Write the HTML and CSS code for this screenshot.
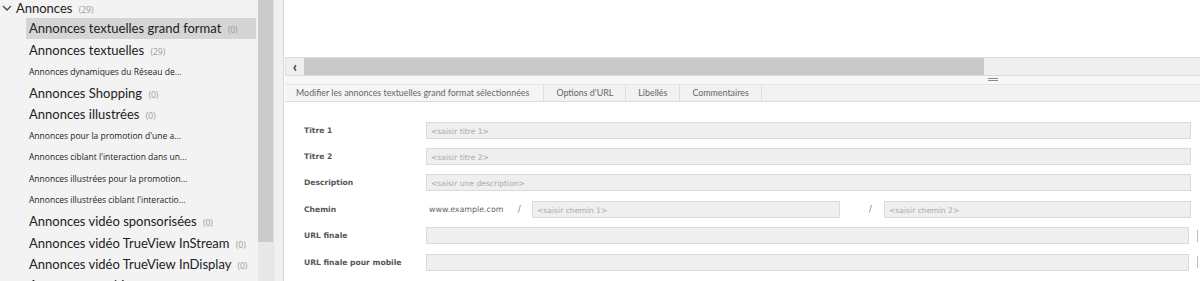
FILE: index.html
```html
<!DOCTYPE html>
<html lang="fr">
<head>
    <meta charset="UTF-8">
    <title>Annonces</title>
    <link rel="stylesheet" href="styles.css">
</head>
<body>
<div class="app">
    <div class="sidebar">
        <ul class="tree">
            <li class="node root">
                <svg class="chev" width="10" height="6" viewBox="0 0 10 6"><path d="M1 1 L5 5 L9 1" fill="none" stroke="#444" stroke-width="1.3"/></svg>
                Annonces <span class="count">(29)</span>
            </li>
            <li class="node big selected">Annonces textuelles grand format <span class="count">(0)</span></li>
            <li class="node big">Annonces textuelles <span class="count">(29)</span></li>
            <li class="node small">Annonces dynamiques du Réseau de...</li>
            <li class="node big">Annonces Shopping <span class="count">(0)</span></li>
            <li class="node big">Annonces illustrées <span class="count">(0)</span></li>
            <li class="node small">Annonces pour la promotion d'une a...</li>
            <li class="node small">Annonces ciblant l'interaction dans un...</li>
            <li class="node small">Annonces illustrées pour la promotion...</li>
            <li class="node small">Annonces illustrées ciblant l'interactio...</li>
            <li class="node big">Annonces vidéo sponsorisées <span class="count">(0)</span></li>
            <li class="node big">Annonces vidéo TrueView InStream <span class="count">(0)</span></li>
            <li class="node big">Annonces vidéo TrueView InDisplay <span class="count">(0)</span></li>
            <li class="node big">Annonces graphiques <span class="count">(0)</span></li>
        </ul>
        <div class="vscroll"><div class="vthumb"></div></div>
        <div class="gutter"></div>
    </div>

    <div class="main">
        <div class="grid-area"></div>
        <div class="hscroll">
            <span class="arrow">&lsaquo;</span>
            <div class="hthumb"></div>
        </div>
        <div class="splitter"><span class="grip"></span></div>
        <div class="tabs">
            <div class="tab active">Modifier les annonces textuelles grand format sélectionnées</div>
            <div class="tab">Options d'URL</div>
            <div class="tab">Libellés</div>
            <div class="tab">Commentaires</div>
        </div>
        <div class="form">
            <div class="row">
                <label>Titre 1</label>
                <div class="field">&lt;saisir titre 1&gt;</div>
            </div>
            <div class="row">
                <label>Titre 2</label>
                <div class="field">&lt;saisir titre 2&gt;</div>
            </div>
            <div class="row">
                <label>Description</label>
                <div class="field">&lt;saisir une description&gt;</div>
            </div>
            <div class="row">
                <label>Chemin</label>
                <span class="domain">www.example.com</span>
                <span class="slash">/</span>
                <div class="field path1">&lt;saisir chemin 1&gt;</div>
                <span class="slash slash2">/</span>
                <div class="field">&lt;saisir chemin 2&gt;</div>
            </div>
            <div class="row">
                <label>URL finale</label>
                <div class="field"></div>
                <span class="edge"></span>
            </div>
            <div class="row">
                <label>URL finale pour mobile</label>
                <div class="field"></div>
                <span class="edge"></span>
            </div>
        </div>
    </div>
</div>
</body>
</html>
```

FILE: styles.css
```css
/* Ecran d'edition des annonces */
body {
    margin: 0;
    width: 1200px;
    height: 281px;
    overflow: hidden;
    background: #fff;
    font-family: Lato, "Open Sans", sans-serif;
}

.app {
    display: flex;
    height: 281px;
}

/* colonne de gauche */
.sidebar {
    display: flex;
    width: 283px;
    flex-shrink: 0;
    border-right: 1px solid #d6d6d6;
}

.tree {
    list-style: none;
    margin: 0;
    padding: 0;
    width: 258px;
    background: #f3f3f3;
    overflow: hidden;
}

.node {
    height: 21.36px;
    line-height: 21.36px;
    padding-left: 29px;
    margin-right: 2px;
    white-space: nowrap;
    color: #222;
}

.node.root {
    padding-left: 2px;
    font-size: 13px;
    line-height: 16px;
    height: 18px;
}

.chev {
    margin-right: 1px;
    vertical-align: 2px;
}

.node.big {
    font-size: 13px;
    line-height: 23px;
}

.node.small {
    font-family: "Open Sans", sans-serif;
    font-size: 8.5px;
    line-height: 22px;
}

.node.selected {
    background: #d5d5d5;
    margin-left: 26px;
    padding-left: 3px;
    line-height: 21px;
}

.count {
    font-family: "Open Sans", sans-serif;
    font-size: 8.5px;
    color: #999;
    margin-left: 3px;
}

.vscroll {
    width: 15px;
    background: #e8e8e8;
}

.vthumb {
    height: 242px;
    background: #cbcbcb;
}

.gutter {
    width: 9px;
    background: #f0f0f0;
    border-left: 1px solid #e2e2e2;
}

/* partie principale */
.main {
    flex: 1;
    display: flex;
    flex-direction: column;
    padding-left: 1px;
}

.grid-area {
    height: 57px;
}

.hscroll {
    display: flex;
    align-items: center;
    height: 17px;
    background: #efefef;
    border: 1px solid #dcdcdc;
    border-right: none;
}

.arrow {
    width: 18px;
    text-align: center;
    font-size: 15px;
    font-weight: bold;
    color: #333;
    line-height: 15px;
}

.hthumb {
    width: 680px;
    height: 17px;
    background: #c9c9c9;
}

.splitter {
    height: 8px;
    display: flex;
    justify-content: flex-start;
    padding-left: 703px;
    background: #f7f7f7;
}

.grip {
    width: 10px;
    height: 3px;
    margin-top: 2px;
    border-top: 1px solid #8a8a8a;
    border-bottom: 1px solid #8a8a8a;
    box-sizing: border-box;
}

.tabs {
    display: flex;
    height: 16px;
    background: #f2f2f2;
    border-top: 1px solid #e4e4e4;
    border-bottom: 1px solid #dcdcdc;
}

.tab {
    padding: 0 12px;
    font-size: 8.9px;
    line-height: 16px;
    color: #666;
    border-right: 1px solid #dedede;
    white-space: nowrap;
}

.tab.active {
    background: #f5f5f5;
    padding: 0 14px 0 11px;
}

/* formulaire */
.form {
    padding: 15px 0 0 19px;
    font-family: "DejaVu Sans", Verdana, sans-serif;
}

.row {
    display: flex;
    align-items: center;
    height: 26.4px;
}

.row label {
    width: 122px;
    flex-shrink: 0;
    font-size: 7.6px;
    font-weight: bold;
    color: #555;
}

.field {
    flex: 1;
    height: 17px;
    line-height: 17px;
    box-sizing: border-box;
    padding-left: 4px;
    margin-right: 9px;
    background: #efefef;
    border: 1px solid #dadada;
    font-size: 7.6px;
    color: #aaa;
}

.domain {
    font-size: 7.9px;
    color: #666;
    margin-left: 3px;
    width: 89px;
}

.slash {
    font-size: 8px;
    color: #777;
    width: 14px;
}

.field.path1 {
    flex: 0 0 308px;
    margin-right: 29px;
}

.slash2 {
    width: 15px;
}

.edge {
    width: 2px;
    height: 12px;
    border-left: 1px solid #bbb;
    margin-left: -1px;
}
```
